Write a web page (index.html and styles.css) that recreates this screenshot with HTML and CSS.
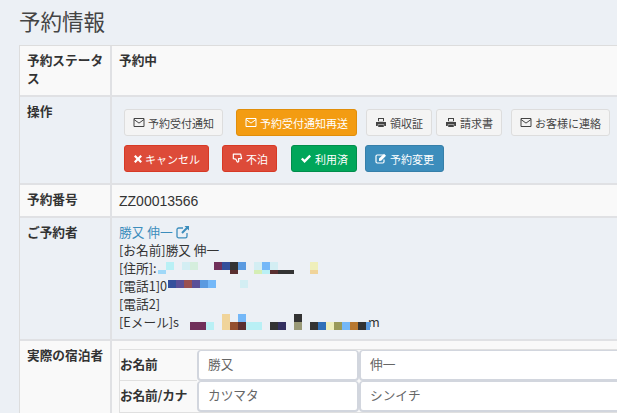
FILE: index.html
```html
<!DOCTYPE html>
<html lang="ja">
<head>
<meta charset="utf-8">
<title>予約情報</title>
<link rel="stylesheet" href="styles.css">
</head>
<body>
<svg class="defs" width="0" height="0" aria-hidden="true">
  <symbol id="i-mail" viewBox="0 0 12 11"><path d="M1 1.500h10v8H1zM1 2.500l5 3.600 5-3.600" fill="none" stroke="currentColor" stroke-width="1"/></symbol>
  <symbol id="i-print" viewBox="0 0 12 11"><path d="M3 1h6v3.200H3zM1 5h10v4H9.200V7.400H2.800V9H1zM3.200 8h5.600v2H3.200z" fill="currentColor"/><path d="M4 2h4v2H4z" fill="#f4f4f4"/></symbol>
  <symbol id="i-x" viewBox="0 0 10 10"><path d="M2.600 1 5 3.400 7.400 1 9 2.600 6.600 5 9 7.400 7.400 9 5 6.600 2.600 9 1 7.400 3.400 5 1 2.600z" fill="currentColor"/></symbol>
  <symbol id="i-down" viewBox="0 0 12 12"><path d="M2 1.200h8l1 5H7.600l.3 2.600c0 1-1.300 1.600-1.800.6L4.600 6.600 2 6.200z" fill="none" stroke="currentColor" stroke-width="1.300" stroke-linejoin="round"/></symbol>
  <symbol id="i-check" viewBox="0 0 12 10"><path d="M1.800 5 4.600 7.800 10.200 2.200" fill="none" stroke="currentColor" stroke-width="2.400"/></symbol>
  <symbol id="i-edit" viewBox="0 0 12 11"><path d="M8 2H2.200C1.500 2 1 2.500 1 3.200v5.600C1 9.500 1.500 10 2.200 10h5.600c.7 0 1.200-.5 1.200-1.200V6.500" fill="none" stroke="currentColor" stroke-width="1.200"/><path d="M4 5.600 9 .8 11 2.800 6.200 7.800 4 8z" fill="currentColor"/></symbol>
  <symbol id="i-ext" viewBox="0 0 14 14"><path d="M11 8v3.200c0 1-.7 1.700-1.600 1.700H2.700C1.800 12.900 1 12.100 1 11.200V4.600C1 3.700 1.800 3 2.700 3H7" fill="none" stroke="currentColor" stroke-width="1.300"/><path d="M8.500 1H13v4.500L11.400 4 6.700 8.700 5.300 7.300 10 2.600z" fill="currentColor"/></symbol>
</svg>
<main class="page">
  <h1 class="title">予約情報</h1>
  <div class="sheet">
    <section class="row row-odd row-status">
      <h2 class="label">予約ステータス</h2>
      <div class="value strong">予約中</div>
    </section>
    <section class="row row-even row-actions">
      <h2 class="label">操作</h2>
      <div class="value actions">
        <div class="btn-line">
          <a class="btn gap-13"><svg class="ico"><use href="#i-mail"/></svg>予約受付通知</a>
          <a class="btn btn-orange gap-9"><svg class="ico"><use href="#i-mail"/></svg>予約受付通知再送</a>
          <a class="btn gap-4"><svg class="ico"><use href="#i-print"/></svg>領収証</a>
          <a class="btn gap-9"><svg class="ico"><use href="#i-print"/></svg>請求書</a>
          <a class="btn"><svg class="ico"><use href="#i-mail"/></svg>お客様に連絡</a>
        </div>
        <div class="btn-line">
          <a class="btn btn-red gap-13"><svg class="ico ico-small"><use href="#i-x"/></svg>キャンセル</a>
          <a class="btn btn-red gap-14"><svg class="ico"><use href="#i-down"/></svg>不泊</a>
          <a class="btn btn-green gap-8"><svg class="ico"><use href="#i-check"/></svg>利用済</a>
          <a class="btn btn-blue"><svg class="ico"><use href="#i-edit"/></svg>予約変更</a>
        </div>
      </div>
    </section>
    <section class="row row-odd row-number">
      <h2 class="label">予約番号</h2>
      <div class="value latin">ZZ00013566</div>
    </section>
    <section class="row row-even row-guest">
      <h2 class="label">ご予約者</h2>
      <div class="value guest">
        <div class="line"><a class="link">勝又 伸一<svg class="ext"><use href="#i-ext"/></svg></a></div>
        <div class="line">[お名前]勝又 伸一</div>
        <div class="line">[住所]:</div>
        <div class="line">[電話1]0</div>
        <div class="line">[電話2]</div>
        <div class="line">[Eメール]s<span class="tail">m</span></div>
        <svg class="mosaic" width="300" height="115" viewBox="0 0 300 115" aria-hidden="true">
          <g transform="translate(-112 -218)">
            <rect x="166" y="262" width="8" height="8" fill="#b9f0f5"/><rect x="158" y="270" width="8" height="4" fill="#9fd8f8"/>
            <rect x="182" y="262" width="8" height="8" fill="#d3eef3"/><rect x="190" y="262" width="8" height="8" fill="#d5eedd"/>
            <rect x="214" y="262" width="8" height="8" fill="#70305a"/><rect x="222" y="262" width="8" height="8" fill="#34509c"/><rect x="230" y="262" width="8" height="8" fill="#333"/><rect x="238" y="262" width="8" height="8" fill="#5a9ae0"/>
            <rect x="230" y="270" width="8" height="4" fill="#5a3030"/>
            <rect x="254" y="262" width="8" height="8" fill="#d3eef3"/><rect x="262" y="262" width="8" height="8" fill="#74b8f8"/><rect x="270" y="262" width="8" height="8" fill="#d3eef3"/>
            <rect x="254" y="270" width="8" height="4" fill="#d5eeb5"/><rect x="262" y="270" width="8" height="4" fill="#b9f0f5"/><rect x="270" y="270" width="8" height="4" fill="#5a3030"/><rect x="278" y="270" width="16" height="4" fill="#333"/>
            <rect x="310" y="262" width="8" height="8" fill="#efefba"/><rect x="310" y="270" width="8" height="4" fill="#f0d49a"/>
            <rect x="168" y="280" width="8" height="8" fill="#34509c"/><rect x="176" y="280" width="8" height="8" fill="#5a5098"/><rect x="184" y="280" width="8" height="8" fill="#9a5050"/><rect x="192" y="280" width="8" height="8" fill="#5a5098"/><rect x="200" y="280" width="8" height="8" fill="#5a9ae0"/><rect x="208" y="280" width="8" height="8" fill="#74b8f8"/><rect x="240" y="280" width="8" height="8" fill="#d3eef3"/>
            <rect x="190" y="322" width="16" height="8" fill="#70305a"/><rect x="206" y="322" width="8" height="8" fill="#b9f0f5"/>
            <rect x="222" y="314" width="8" height="16" fill="#f0d49a"/><rect x="230" y="322" width="8" height="8" fill="#945030"/>
            <rect x="238" y="314" width="8" height="8" fill="#74b8f8"/><rect x="238" y="322" width="8" height="8" fill="#5a3030"/><rect x="246" y="322" width="16" height="8" fill="#b9f0f5"/>
            <rect x="270" y="322" width="8" height="8" fill="#333"/><rect x="278" y="322" width="8" height="8" fill="#333060"/>
            <rect x="294" y="314" width="8" height="8" fill="#333"/><rect x="294" y="322" width="8" height="8" fill="#9a9a78"/>
            <rect x="310" y="322" width="8" height="8" fill="#333"/><rect x="318" y="322" width="8" height="8" fill="#3070b8"/><rect x="326" y="322" width="8" height="8" fill="#efefba"/><rect x="334" y="322" width="8" height="8" fill="#9a9a58"/><rect x="342" y="322" width="8" height="8" fill="#74b8f8"/><rect x="350" y="322" width="8" height="8" fill="#b87830"/><rect x="358" y="322" width="8" height="8" fill="#333"/><rect x="366" y="322" width="4" height="8" fill="#5a9ae0"/>
          </g>
        </svg>
      </div>
    </section>
    <section class="row row-odd row-stay">
      <h2 class="label">実際の宿泊者</h2>
      <div class="value stay">
        <div class="inner">
          <div class="inner-label">お名前</div>
          <div class="field">勝又</div>
          <div class="field">伸一</div>
          <div class="inner-label">お名前/カナ</div>
          <div class="field">カツマタ</div>
          <div class="field">シンイチ</div>
        </div>
      </div>
    </section>
  </div>
</main>
</body>
</html>
```

FILE: styles.css
```css
* { box-sizing: border-box; }
html, body { height: 100%; }
body {
  margin: 0;
  overflow: hidden;
  background: #ecf0f5;
  color: #333;
  font-family: "Noto Sans CJK JP", "Liberation Sans", sans-serif;
  font-size: 13px;
}
.defs { position: absolute; }
.page { padding: 0 0 0 19px; width: 760px; }
.title {
  margin: 0;
  height: 45px;
  padding-top: 7px;
  font-size: 21.5px;
  line-height: 28px;
  font-weight: 400;
  color: #444;
}
.sheet { border: 1px solid #ddd; border-width: 1px 0 0 1px; width: 741px; }
.row { display: grid; grid-template-columns: 92px 1fr; border-bottom: 2px solid #e0e1e4; }
.row-odd { background: #f9f9f9; }
.row-even { background: #ecf0f5; }
.row-status { height: 51px; }
.row-actions { height: 88px; }
.row-number { height: 33px; }
.row-guest { height: 123px; }
.row-stay { height: 120px; border-bottom: 0; }
.label {
  margin: 0;
  padding: 5px 2px 6px 7px;
  font-size: 12.7px;
  line-height: 18px;
  font-weight: 700;
  color: #333;
  border-right: 2px solid #e0e1e4;
}
.value { padding: 5px 7px; line-height: 18px; font-size: 12.7px; }
.strong { font-weight: 700; }
.latin { font-family: "Liberation Sans", sans-serif; font-size: 14px; padding-top: 7px; }
.actions { padding: 12px 0 0 12px; display: flex; flex-direction: column; gap: 9px; }
.btn-line { display: flex; }
.btn {
  display: flex;
  align-items: center;
  height: 27px;
  padding: 0 8px;
  border: 1px solid #ddd;
  border-radius: 3px;
  background: #f4f4f4;
  color: #444;
  font-size: 11px;
  white-space: nowrap;
}
.btn-orange { background: #f39c12; border-color: #e08e0b; color: #fff; }
.btn-red { background: #dd4b39; border-color: #d73925; color: #fff; }
.btn-green { background: #00a65a; border-color: #008d4c; color: #fff; }
.btn-blue { background: #3c8dbc; border-color: #367fa9; color: #fff; padding: 0 9px; }
.gap-4 { margin-right: 4px; }
.gap-8 { margin-right: 8px; }
.gap-9 { margin-right: 9px; }
.gap-13 { margin-right: 13px; }
.gap-14 { margin-right: 14px; }
.ico { width: 12px; height: 11px; margin-right: 3px; flex: none; }
.ico-small { width: 10px; height: 10px; margin-right: 2px; }
.guest { position: relative; padding-top: 5px; }
.line { height: 18px; line-height: 18px; white-space: nowrap; }
.link { color: #3c8dbc; }
.ext { width: 14px; height: 14px; margin-left: 3px; vertical-align: -2px; }
.tail { position: absolute; left: 256px; top: 95px; }
.mosaic { position: absolute; left: 0; top: 0; pointer-events: none; }
.stay { padding: 8px 7px 0; }
.inner {
  display: grid;
  grid-template-columns: 77px 162px 1fr;
  grid-auto-rows: 31px;
  border: 1px solid #e0e0e0;
  border-width: 1px 0 1px 1px;
}
.inner-label {
  display: flex;
  align-items: center;
  padding-bottom: 3px;
  font-weight: 700;
  background: #f9f9f9;
  font-size: 12.7px;
  white-space: nowrap;
  letter-spacing: -0.2px;
  border-bottom: 1px solid #e0e0e0;
}
.inner-label:nth-last-child(3) { border-bottom: 0; }
.field {
  display: flex;
  align-items: center;
  padding: 0 0 3px 9px;
  background: #fff;
  border: 2px solid #d2d6de;
  border-width: 1px 2px 2px;
  border-radius: 4px;
  color: #666;
  font-size: 12.7px;
}
```
